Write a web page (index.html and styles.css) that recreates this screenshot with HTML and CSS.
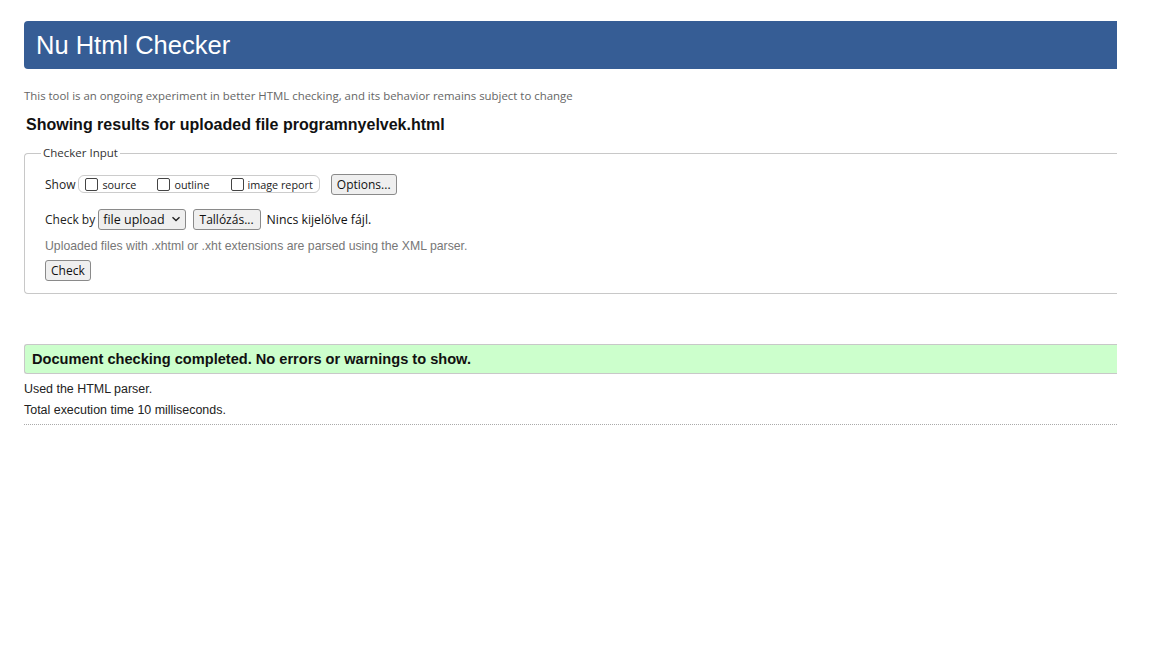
FILE: index.html
```html
<!DOCTYPE html>
<html lang="en">
<head>
<meta charset="utf-8">
<title>Showing results for programnyelvek.html - Nu Html Checker</title>
<link rel="stylesheet" href="styles.css">
</head>
<body>
<div class="page">
  <h1 class="banner">Nu Html Checker</h1>
  <p class="subtitle">This tool is an ongoing experiment in better HTML checking, and its behavior remains subject to change</p>
  <h2 class="results-title">Showing results for uploaded file programnyelvek.html</h2>
  <fieldset class="checker">
    <legend class="legend">Checker Input</legend>
    <div class="row">
      <span class="label">Show</span>
      <span class="show-group">
        <label class="opt"><span class="box"></span>source</label>
        <label class="opt"><span class="box"></span>outline</label>
        <label class="opt"><span class="box"></span>image report</label>
      </span>
      <button class="btn btn-options" type="button">Options...</button>
    </div>
    <div class="row row-check">
      <span class="label">Check by</span>
      <span class="select">file upload
        <svg class="chev" width="10" height="6" viewBox="0 0 10 6"><path d="M1.5 1.2 L5 4.6 L8.5 1.2" fill="none" stroke="#222" stroke-width="1.4"/></svg>
      </span>
      <button class="btn btn-browse" type="button">Tallózás...</button>
      <span class="nofile">Nincs kijelölve fájl.</span>
    </div>
    <p class="hint">Uploaded files with .xhtml or .xht extensions are parsed using the XML parser.</p>
    <button class="btn btn-check" type="submit">Check</button>
  </fieldset>
  <p class="success">Document checking completed. No errors or warnings to show.</p>
  <p class="details">Used the HTML parser.</p>
  <p class="details">Total execution time 10 milliseconds.</p>
  <hr class="rule">
</div>
</body>
</html>
```
FILE: styles.css
```css
html, body {
  margin: 0;
  padding: 0;
  background: #fff;
}
body {
  font-family: "Liberation Sans", Arial, sans-serif;
  color: #222;
  overflow: hidden;
}
.page {
  margin-left: 24px;
  width: 1093px;
  padding-top: 21px;
}
.banner {
  margin: 0;
  height: 48px;
  background: #365d95;
  color: #fff;
  font-weight: normal;
  font-size: 25.5px;
  line-height: 48px;
  padding-left: 12px;
  border-radius: 4px 0 0 4px;
}
.subtitle {
  margin: 19px 0 0;
  font-family: "Open Sans", "Noto Sans", sans-serif;
  font-size: 11.42px;
  line-height: 16px;
  color: #666;
}
.results-title {
  margin: 11px 0 0 2px;
  font-size: 16px;
  line-height: 20px;
  font-weight: bold;
  color: #111;
}
.checker {
  margin: 10px 0 0;
  padding: 0 0 12px 20px;
  border: 1px solid #c8c8c8;
  border-right: none;
  border-radius: 4px 0 0 4px;
  font-family: "Open Sans", "Noto Sans", sans-serif;
  font-size: 12px;
  color: #222;
}
.legend {
  padding: 0 2px;
  margin-left: -4px;
  font-size: 11.5px;
  line-height: 16px;
  color: #333;
}
.row {
  display: flex;
  align-items: center;
  margin-top: 12px;
  height: 22px;
}
.row-check {
  margin-top: 13px;
}
.label {
  margin-right: 3px;
}
.show-group {
  display: inline-flex;
  align-items: center;
  height: 16px;
  border: 1px solid #ccc;
  border-radius: 6px;
  padding: 0 6px 0 6px;
  font-size: 10.8px;
}
.opt {
  display: inline-flex;
  align-items: center;
  margin-right: 21px;
}
.opt:last-child {
  margin-right: 0;
}
.box {
  display: inline-block;
  width: 11px;
  height: 11px;
  border: 1px solid #444;
  border-radius: 2px;
  margin-right: 4px;
  background: #fff;
}
.btn {
  font-family: "Open Sans", "Noto Sans", sans-serif;
  font-size: 12px;
  color: #111;
  background: #efefef;
  border: 1px solid #8a8a8a;
  border-radius: 3px;
  height: 21px;
  padding: 0 5px;
  line-height: 19px;
}
.btn-options {
  margin-left: 11px;
  padding: 0 5px;
}
.select {
  display: inline-flex;
  align-items: center;
  height: 19px;
  padding: 0 4px 0 4px;
  border: 1px solid #8a8a8a;
  border-radius: 3px;
  background: #efefef;
  font-size: 12.5px;
  color: #111;
}
.chev {
  margin-left: 6px;
}
.btn-browse {
  margin-left: 7px;
  padding: 0 6px;
}
.nofile {
  margin-left: 6px;
  font-size: 12.3px;
  color: #111;
}
.hint {
  margin: 9px 0 0;
  font-family: "Liberation Sans", Arial, sans-serif;
  font-size: 12.26px;
  line-height: 14px;
  color: #777;
}
.btn-check {
  margin-top: 7px;
  display: block;
  padding: 0 5px;
}
.success {
  margin: 50px 0 0;
  height: 28px;
  line-height: 28px;
  background: #ccffcc;
  border: 1px solid #c8c8c8;
  border-right: none;
  border-radius: 3px 0 0 3px;
  padding-left: 7px;
  font-size: 14.6px;
  font-weight: bold;
  color: #111;
}
.details {
  margin: 8px 0 0;
  font-size: 12.45px;
  line-height: 14px;
  color: #222;
}
.details + .details {
  margin-top: 7px;
}
.rule {
  margin: 7px 0 0;
  border: none;
  border-top: 1px dotted #aaa;
  height: 0;
}
```
